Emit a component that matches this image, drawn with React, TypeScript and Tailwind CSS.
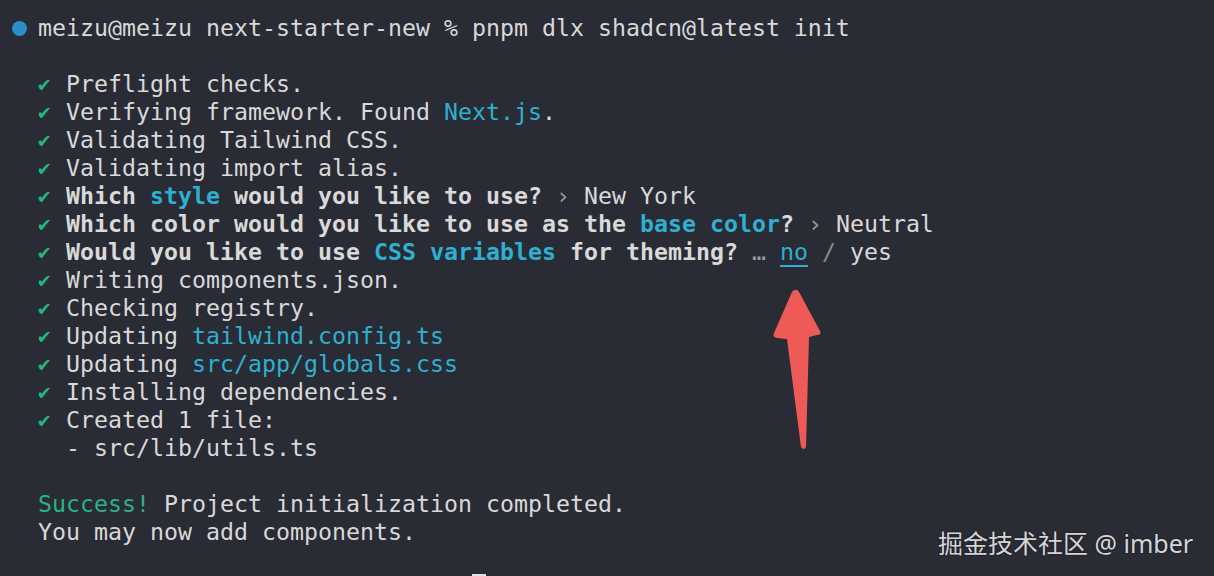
import React from "react";

const C = "text-[#2eb0d2]";
const G = "text-[#27b57c]";

function Check() {
  return <span className={`${G} text-[21px] font-bold inline-block w-[28px]`}>✔</span>;
}

function Line({ children, check = true }: { children?: React.ReactNode; check?: boolean }) {
  return (
    <div className="h-[28px] leading-[28px] whitespace-pre flex items-center">
      {check ? <Check /> : null}
      <span>{children}</span>
    </div>
  );
}

export default function App() {
  return (
    <div
      className="relative w-[1214px] h-[576px] overflow-hidden bg-[#292c34] text-[#d9d9d9] text-[23.25px]"
      style={{ fontFamily: '"DejaVu Sans Mono", monospace' }}
    >
      <div className="pt-[14px] pl-[12px]">
        <div className="h-[28px] leading-[28px] whitespace-pre flex items-center">
          <span className="w-[15px] h-[15px] rounded-full bg-[#2a8fc4] mr-[11px]" />
          <span>meizu@meizu next-starter-new % pnpm dlx shadcn@latest init</span>
        </div>
        <div className="pl-[26px]">
          <div className="h-[28px]" />
          <Line>Preflight checks.</Line>
          <Line>
            Verifying framework. Found <span className={C}>Next.js</span>.
          </Line>
          <Line>Validating Tailwind CSS.</Line>
          <Line>Validating import alias.</Line>
          <Line>
            <b className="font-bold">
              Which <span className={C}>style</span> would you like to use?
            </b>{" "}
            <span className="text-[#9a9a9a]">›</span> New York
          </Line>
          <Line>
            <b className="font-bold">
              Which color would you like to use as the <span className={C}>base color</span>?
            </b>{" "}
            <span className="text-[#9a9a9a]">›</span> Neutral
          </Line>
          <Line>
            <b className="font-bold">
              Would you like to use <span className={C}>CSS variables</span> for theming?
            </b>{" "}
            <span className="text-[#9a9a9a]">…</span>{" "}
            <span className={`${C} underline underline-offset-[5px] decoration-[2px]`}>no</span>{" "}
            <span className="text-[#8a8a8a]">/</span> yes
          </Line>
          <Line>Writing components.json.</Line>
          <Line>Checking registry.</Line>
          <Line>
            Updating <span className={C}>tailwind.config.ts</span>
          </Line>
          <Line>
            Updating <span className={C}>src/app/globals.css</span>
          </Line>
          <Line>Installing dependencies.</Line>
          <Line>Created 1 file:</Line>
          <Line check={false}>{"  - src/lib/utils.ts"}</Line>
          <div className="h-[28px]" />
          <Line check={false}>
            <span className="text-[#29b384]">Success!</span> Project initialization completed.
          </Line>
          <Line check={false}>You may now add components.</Line>
          <div className="h-[28px]" />
          <div className="ml-[434px] w-[14px] h-[28px] bg-[#e2e2e6]" />
        </div>
      </div>

      <svg
        className="absolute left-0 top-0 pointer-events-none"
        width="1214"
        height="576"
        viewBox="0 0 1214 576"
      >
        <path
          d="M795 290 Q797 289 799 292 L820 331 Q822 335 817 335 L809 337 L806 447 Q804 451 801 447 L787 339 L777 338 Q772 337 774 333 L792 292 Q793 290 795 290 Z"
          fill="#ee5b56"
        />
      </svg>

      <div
        className="absolute left-[938px] top-[527px] text-[25px] leading-[32px] text-[#d6d6d6] whitespace-pre [text-shadow:0_0_2px_rgba(0,0,0,0.6)]"
        style={{ fontFamily: '"Noto Sans", "Noto Sans CJK SC", sans-serif' }}
      >
        掘金技术社区 @ imber
      </div>
    </div>
  );
}
